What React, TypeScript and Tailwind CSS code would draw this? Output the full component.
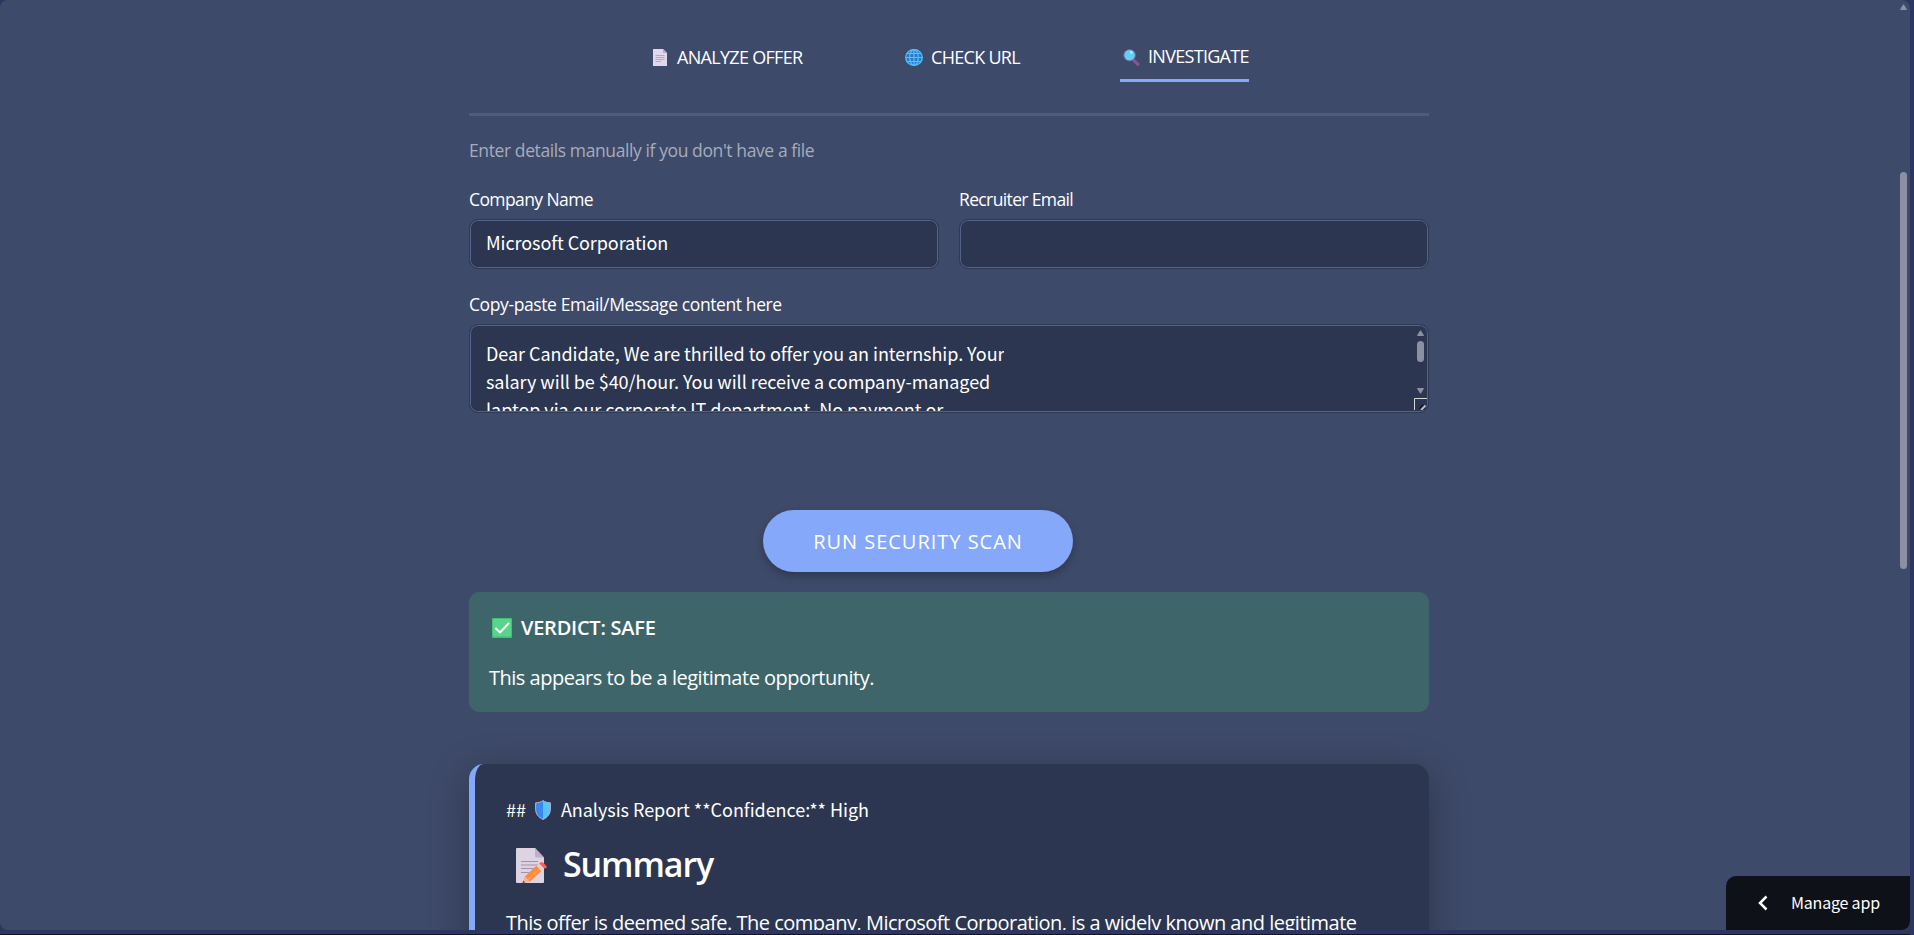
import { useState } from "react";

const segoe = "font-['Open_Sans','Noto_Sans',sans-serif]";
const source = "font-['Noto_Sans_CJK_SC',sans-serif]";

const message = [
  "Dear Candidate, We are thrilled to offer you an internship. Your",
  "salary will be $40/hour. You will receive a company-managed",
  "laptop via our corporate IT department. No payment or",
];

function PageIcon() {
  return (
    <svg width="14" height="17" viewBox="0 0 14 17" className="shrink-0">
      <path d="M0 0h10l4 4v13H0z" fill="#e2d8ec" />
      <path d="M10 0v4h4z" fill="#b9abc8" />
      <path d="M2.500 6.500h9M2.500 8.500h9M2.500 10.500h9M2.500 12.500h5.500" stroke="#aa9cb8" strokeWidth=".8" />
    </svg>
  );
}

function GlobeIcon() {
  return (
    <svg width="18" height="17" viewBox="0 0 18 17" className="shrink-0">
      <ellipse cx="9" cy="8.500" rx="8.800" ry="8.400" fill="#2c79c4" />
      <g fill="none" stroke="#4fc3fa" strokeWidth="1.200">
        <ellipse cx="9" cy="8.500" rx="8.300" ry="7.900" />
        <ellipse cx="9" cy="8.500" rx="4.300" ry="7.900" />
        <path d="M9 .5v16M.8 8.500h16.400M2.200 4.500h13.600M2.200 12.500h13.600" />
      </g>
    </svg>
  );
}

function LensIcon() {
  return (
    <svg width="17" height="17" viewBox="0 0 17 17" className="shrink-0">
      <path d="M10.800 11.300l4.200 4" stroke="#8d5293" strokeWidth="3" strokeLinecap="round" />
      <ellipse cx="6.600" cy="6.200" rx="5.800" ry="5.700" fill="#5fd0ee" stroke="#7d5796" strokeWidth=".9" />
      <circle cx="8.300" cy="3.500" r="1.400" fill="#a9ecfb" />
    </svg>
  );
}

function CheckIcon() {
  return (
    <svg width="20" height="20" viewBox="0 0 20 20" className="shrink-0">
      <rect width="20" height="20" rx="1" fill="#43bf76" />
      <rect x="1" y="1" width="18" height="17.500" rx="1" fill="#55d68b" />
      <path d="M4 10.500l4 4 8.500-9" fill="none" stroke="#fff" strokeWidth="1.900" strokeLinecap="round" strokeLinejoin="round" />
    </svg>
  );
}

function ShieldIcon() {
  return (
    <svg width="16" height="20" viewBox="0 0 16 20" className="shrink-0">
      <path d="M8 .5C6 2.200 3.500 2.600 .6 2.800V9c0 5 3 8.500 7.400 10.500z" fill="#3889ee" />
      <path d="M8 .5c2 1.700 4.500 2.100 7.400 2.300V9c0 5-3 8.500-7.400 10.500z" fill="#53c4ff" />
      <path d="M8 .6C6 2.200 3.500 2.600 .6 2.800V9c0 5 3 8.500 7.400 10.500 4.400-2 7.400-5.500 7.400-10.500V2.800C12.500 2.600 10 2.200 8 .6z" fill="none" stroke="#b4b3c6" />
    </svg>
  );
}

function MemoIcon() {
  return (
    <svg width="32" height="36" viewBox="0 0 32 36" className="shrink-0">
      <path d="M1 0h18l9 9.500V34a1 1 0 0 1-1 1H1a1 1 0 0 1-1-1V1a1 1 0 0 1 1-1z" fill="#ddd3e2" />
      <path d="M19 0v8a1.500 1.500 0 0 0 1.500 1.500H28z" fill="#bcb0c4" />
      <path d="M5 13.500h17M5 17h17M5 20.500h14M5 24.500h8" stroke="#9e94a8" strokeWidth="1" />
      <path d="M9 28.500L20.500 17.500l5 5.500L14 33.500l-7 1.500z" fill="#ff8a3d" />
      <path d="M12 31.500l12-11" stroke="#ffa654" strokeWidth="1.500" />
      <path d="M9 28.500l5 5-7 1.500z" fill="#e9b99b" />
      <path d="M7.500 32.500l-1.300 2.500 2.800-.6z" fill="#733d53" />
      <path d="M20.500 17.500l2.600-2.300 5 5.200-2.600 2.600z" fill="#d9d2e2" />
      <path d="M23.100 15.200l2-1a1.700 1.700 0 0 1 2 .3l3.300 3.400a1.400 1.400 0 0 1 0 2l-2.300.5z" fill="#ff5f4f" />
    </svg>
  );
}

const tabs = [
  { name: "ANALYZE OFFER", Icon: PageIcon, box: "mr-[101px] gap-[10px]", text: "w-[127px]" },
  { name: "CHECK URL", Icon: GlobeIcon, box: "mr-[98px] gap-[8px]", text: "w-[91px]" },
  { name: "INVESTIGATE", Icon: LensIcon, box: "gap-[8px] pl-[3px]", text: "w-[101px]" },
];

function Arrow({ down = false }: { down?: boolean }) {
  return (
    <svg width="7" height="6" viewBox="0 0 7 6" className={down ? "rotate-180" : ""}>
      <path d="M3.500 .7L6.500 5.500H.5z" fill="#8b90a3" stroke="#8b90a3" strokeLinejoin="round" />
    </svg>
  );
}

const field =
  "rounded-[9px] border border-[#2f3a57] bg-[#2c3650] shadow-[inset_0_0_0_1px_#53628a]";
const label = "block h-[33px] text-[17.5px] leading-[26px]";

export default function App() {
  const [active, setActive] = useState("INVESTIGATE");
  const [company, setCompany] = useState("Microsoft Corporation");
  const [email, setEmail] = useState("");

  return (
    <div className={`h-[935px] w-full overflow-hidden bg-[#2b3761] pr-[4px] text-white ${segoe}`}>
      <div className="relative flex h-[930px] justify-between overflow-hidden rounded-lg bg-[#3e4a69]">
        <main className="ml-[469px] w-[960px]">
          <nav className="flex h-[113px] pl-[184px] pt-[41px]">
            {tabs.map(({ name, Icon, box, text }) => (
              <button
                key={name}
                onClick={() => setActive(name)}
                className={`flex h-[41px] items-start whitespace-nowrap text-left text-[18px] tracking-[-0.7px] ${box} ${
                  active === name ? "border-b-[3px] border-[#86a8fa] leading-[31px]" : "leading-[33px]"
                }`}
              >
                <span className="mt-[8px]">
                  <Icon />
                </span>
                <span className={text}>{name}</span>
              </button>
            ))}
          </nav>
          <div className="h-[3px] bg-[#4f5b79]" />

          <p className="mt-[21px] h-[28px] text-[17.5px] leading-[26px] tracking-[-0.4px] text-[#a6acbb]">
            Enter details manually if you don't have a file
          </p>

          <div className="mt-[21px] flex gap-5">
            <label className="flex-1">
              <span className={`${label} tracking-[-0.6px]`}>Company Name</span>
              <div className={`h-[50px] ${field}`}>
                <input
                  value={company}
                  onChange={(e) => setCompany(e.target.value)}
                  className={`h-full w-full bg-transparent px-[16px] pb-[4px] text-[18px] tracking-[-0.08px] outline-none ${source}`}
                />
              </div>
            </label>
            <label className="flex-1">
              <span className={`${label} tracking-[-0.63px]`}>Recruiter Email</span>
              <div className={`h-[50px] ${field}`}>
                <input
                  value={email}
                  onChange={(e) => setEmail(e.target.value)}
                  className={`h-full w-full bg-transparent px-[16px] outline-none ${source}`}
                />
              </div>
            </label>
          </div>

          <p className={`mt-[22px] tracking-[-0.4px] ${label}`}>
            Copy-paste Email/Message content here
          </p>
          <div className={`flex h-[89px] justify-between overflow-hidden pl-[16px] ${field}`}>
            <div className={`h-[86px] overflow-hidden whitespace-nowrap pt-[14px] text-[18px] leading-[28px] tracking-[-0.05px] ${source}`}>
              {message.map((line) => (
                <p key={line}>{line}</p>
              ))}
            </div>
            <div className="flex w-[15px] flex-col items-end pt-[5px]">
              <div className="mr-[4px] flex h-[64px] w-[7px] flex-col items-center">
                <Arrow />
                <div className="mb-auto mt-[5px] h-[21px] w-[7px] rounded-full bg-[#8b90a3]" />
                <Arrow down />
              </div>
              <svg width="13" height="12" viewBox="0 0 13 12" className="mr-px mt-[4px] shrink-0">
                <path d="M.5 12V.5H13" fill="none" stroke="#d5d7dc" />
                <path d="M5.500 11l4-4" stroke="#10131b" strokeWidth="2" />
                <path d="M7 12l4.500-4.500" stroke="#b6b9c1" strokeWidth="2.200" />
                <path d="M9 12.500l3-3" stroke="#10131b" strokeWidth="1" />
              </svg>
            </div>
          </div>

          <button className="ml-[294px] mt-[97px] block h-[62px] w-[310px] rounded-full bg-[#86a8fa] pt-px text-[20px] tracking-[0.98px] shadow-[0_4px_8px_rgba(0,0,0,0.25)]">
            RUN SECURITY SCAN
          </button>

          <section className="mt-[20px] h-[120px] rounded-[10px] bg-[#3e666a] px-5 pt-[20px]">
            <div className="flex h-[32px] items-center gap-[9px] pl-[3px] text-[20px] font-semibold">
              <CheckIcon />
              <span className="tracking-[-0.25px]">VERDICT: SAFE</span>
            </div>
            <p className="mt-[18px] text-[20px] leading-[32px] tracking-[-0.49px]">
              This appears to be a legitimate opportunity.
            </p>
          </section>

          <section className="mt-[52px] h-[400px] whitespace-nowrap rounded-[15px] border-l-[6px] border-[#86a8fa] bg-[#2c3650] pl-[31px] pt-[30px] shadow-[0_10px_40px_rgba(0,0,0,0.3)]">
            <div className={`flex h-[32px] items-center text-[18px] tracking-[-0.035px] ${source}`}>
              <span className="-mt-[2px]">##</span>
              <span className="ml-[9px] mr-[10px]"><ShieldIcon /></span>
              <span className="-mt-[2px]">Analysis Report **Confidence:** High</span>
            </div>
            <div className="mt-[14px] flex h-[48px] items-center gap-[15px] pl-[10px]">
              <span className="mt-[3px]"><MemoIcon /></span>
              <h2 className="text-[34px] font-semibold tracking-[-1.1px]">Summary</h2>
            </div>
            <p className="mt-[19px] text-[20px] leading-[32px] tracking-[-0.495px]">
              This offer is deemed safe. The company, Microsoft Corporation, is a widely known and legitimate
            </p>
          </section>
        </main>

        <div className="mr-px flex w-[11px] flex-col items-center pt-[4px]">
          <Arrow />
          <div className="mt-[162px] h-[397px] w-[7px] rounded-full bg-[#8b90a3]" />
        </div>

        <button className={`absolute bottom-0 right-0 flex h-[54px] w-[184px] items-center rounded-br-lg rounded-tl-[10px] bg-[#0e1117] pl-[32px] text-[16px] tracking-[-0.2px] ${source}`}>
          <svg width="10" height="16" viewBox="0 0 10 16">
            <path d="M8.500 1.500L2 8l6.500 6.500" fill="none" stroke="#fff" strokeWidth="2.500" />
          </svg>
          <span className="-mt-[2px] ml-[23px]">Manage app</span>
        </button>
      </div>
      <div className="mt-[4px] h-px bg-[#14161d]" />
    </div>
  );
}
